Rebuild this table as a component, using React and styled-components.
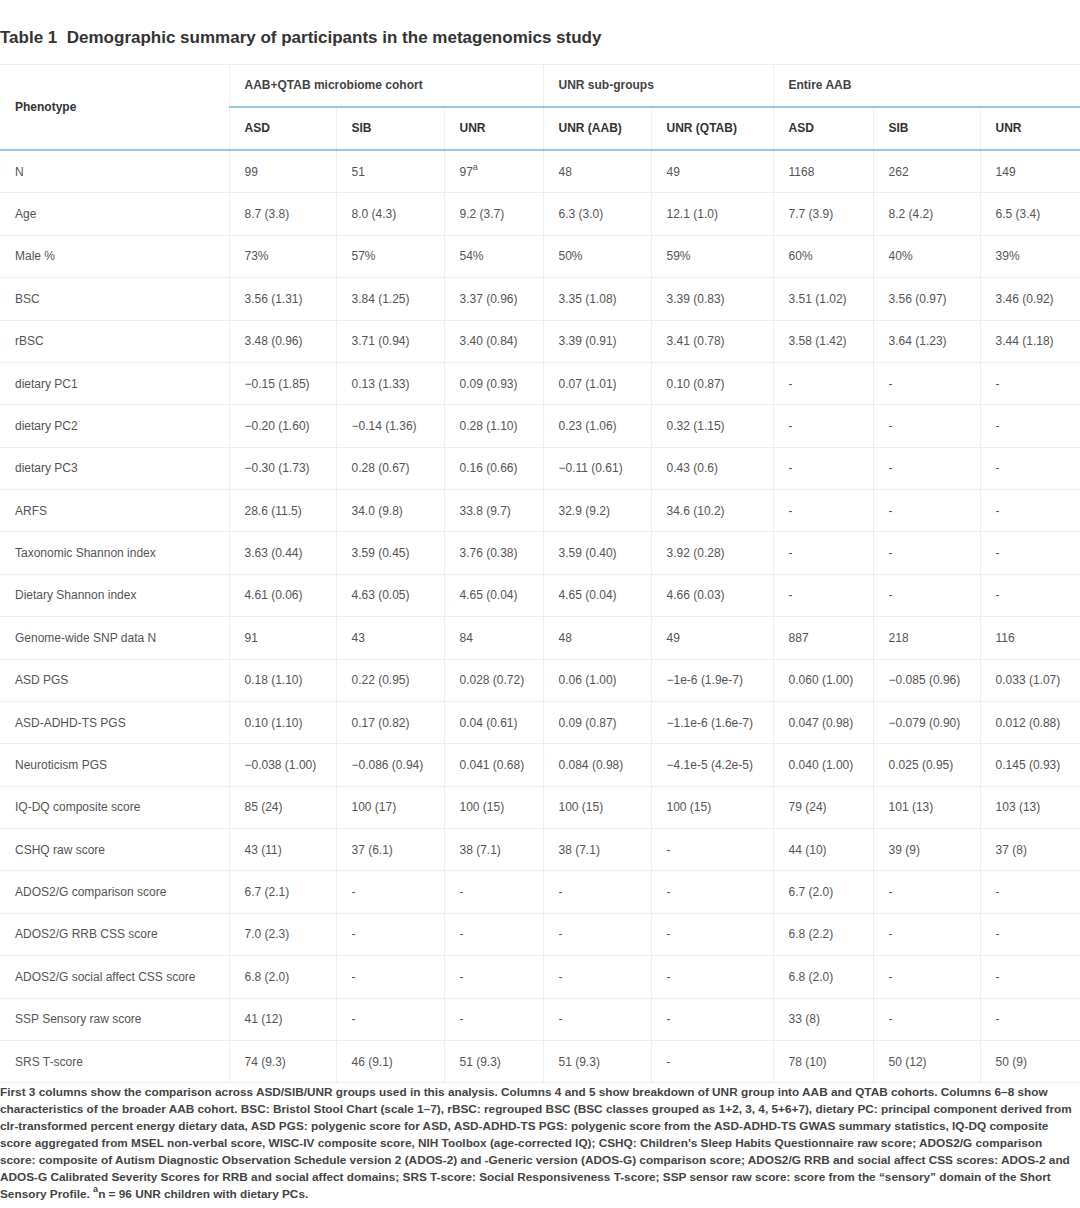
import React from 'react'
import styled, { createGlobalStyle } from 'styled-components'

const GlobalStyle = createGlobalStyle`
  html, body {
    margin: 0;
    padding: 0;
    background: #fff;
  }
  body {
    font-family: "Liberation Sans", Arial, sans-serif;
  }
`

const Page = styled.div`
  width: 1080px;
  overflow: hidden;
`

const Title = styled.h2`
  margin: 0;
  padding: 28px 0 0 0;
  font-size: 17px;
  line-height: 20px;
  font-weight: 700;
  color: #333;
  height: 36px;
  box-sizing: content-box;
`

const Table = styled.table`
  width: 1080px;
  table-layout: fixed;
  border-collapse: collapse;
  border-top: 1px solid #eee;
  font-size: 12px;
`

const HeadCell = styled.th`
  text-align: left;
  font-weight: 700;
  color: #333;
  padding: 11px 15px 12px 15px;
  height: 18px;
  line-height: 18px;
  border-left: 1px solid #f0f0f0;
  border-right: 1px solid #f0f0f0;
  border-bottom: ${p => (p.$bottom ? '2px solid #93c9e0' : '1px solid #eee')};
  &:first-child {
    border-left: none;
  }
`

const GroupCell = styled(HeadCell)`
  color: #444;
  border-bottom: 2px solid #93c9e0;
`

const Cell = styled.td`
  padding: 11.7px 15px;
  line-height: 18px;
  color: #555;
  border: 1px solid #eee;
  white-space: nowrap;
  &:first-child {
    border-left: none;
  }
`

const Sup = styled.sup`
  font-size: 9px;
  line-height: 0;
  vertical-align: 6px;
`

const Footnote = styled.p`
  margin: 1px 0 0 0;
  width: 1076px;
  font-size: 11.8px;
  line-height: 17px;
  font-weight: 700;
  color: #444;
`

const widths = [229, 107, 108, 99, 108, 122, 100, 107, 100]

const M = '\u2212'

const rows = [
  ['N', '99', '51', <>97<Sup>a</Sup></>, '48', '49', '1168', '262', '149'],
  ['Age', '8.7 (3.8)', '8.0 (4.3)', '9.2 (3.7)', '6.3 (3.0)', '12.1 (1.0)', '7.7 (3.9)', '8.2 (4.2)', '6.5 (3.4)'],
  ['Male %', '73%', '57%', '54%', '50%', '59%', '60%', '40%', '39%'],
  ['BSC', '3.56 (1.31)', '3.84 (1.25)', '3.37 (0.96)', '3.35 (1.08)', '3.39 (0.83)', '3.51 (1.02)', '3.56 (0.97)', '3.46 (0.92)'],
  ['rBSC', '3.48 (0.96)', '3.71 (0.94)', '3.40 (0.84)', '3.39 (0.91)', '3.41 (0.78)', '3.58 (1.42)', '3.64 (1.23)', '3.44 (1.18)'],
  ['dietary PC1', M + '0.15 (1.85)', '0.13 (1.33)', '0.09 (0.93)', '0.07 (1.01)', '0.10 (0.87)', '-', '-', '-'],
  ['dietary PC2', M + '0.20 (1.60)', M + '0.14 (1.36)', '0.28 (1.10)', '0.23 (1.06)', '0.32 (1.15)', '-', '-', '-'],
  ['dietary PC3', M + '0.30 (1.73)', '0.28 (0.67)', '0.16 (0.66)', M + '0.11 (0.61)', '0.43 (0.6)', '-', '-', '-'],
  ['ARFS', '28.6 (11.5)', '34.0 (9.8)', '33.8 (9.7)', '32.9 (9.2)', '34.6 (10.2)', '-', '-', '-'],
  ['Taxonomic Shannon index', '3.63 (0.44)', '3.59 (0.45)', '3.76 (0.38)', '3.59 (0.40)', '3.92 (0.28)', '-', '-', '-'],
  ['Dietary Shannon index', '4.61 (0.06)', '4.63 (0.05)', '4.65 (0.04)', '4.65 (0.04)', '4.66 (0.03)', '-', '-', '-'],
  ['Genome-wide SNP data N', '91', '43', '84', '48', '49', '887', '218', '116'],
  ['ASD PGS', '0.18 (1.10)', '0.22 (0.95)', '0.028 (0.72)', '0.06 (1.00)', M + '1e-6 (1.9e-7)', '0.060 (1.00)', M + '0.085 (0.96)', '0.033 (1.07)'],
  ['ASD-ADHD-TS PGS', '0.10 (1.10)', '0.17 (0.82)', '0.04 (0.61)', '0.09 (0.87)', M + '1.1e-6 (1.6e-7)', '0.047 (0.98)', M + '0.079 (0.90)', '0.012 (0.88)'],
  ['Neuroticism PGS', M + '0.038 (1.00)', M + '0.086 (0.94)', '0.041 (0.68)', '0.084 (0.98)', M + '4.1e-5 (4.2e-5)', '0.040 (1.00)', '0.025 (0.95)', '0.145 (0.93)'],
  ['IQ-DQ composite score', '85 (24)', '100 (17)', '100 (15)', '100 (15)', '100 (15)', '79 (24)', '101 (13)', '103 (13)'],
  ['CSHQ raw score', '43 (11)', '37 (6.1)', '38 (7.1)', '38 (7.1)', '-', '44 (10)', '39 (9)', '37 (8)'],
  ['ADOS2/G comparison score', '6.7 (2.1)', '-', '-', '-', '-', '6.7 (2.0)', '-', '-'],
  ['ADOS2/G RRB CSS score', '7.0 (2.3)', '-', '-', '-', '-', '6.8 (2.2)', '-', '-'],
  ['ADOS2/G social affect CSS score', '6.8 (2.0)', '-', '-', '-', '-', '6.8 (2.0)', '-', '-'],
  ['SSP Sensory raw score', '41 (12)', '-', '-', '-', '-', '33 (8)', '-', '-'],
  ['SRS T-score', '74 (9.3)', '46 (9.1)', '51 (9.3)', '51 (9.3)', '-', '78 (10)', '50 (12)', '50 (9)'],
]

const App = () => {
  return (
    <Page>
      <GlobalStyle />
      <Title>Table 1&nbsp; Demographic summary of participants in the metagenomics study</Title>
      <Table>
        <colgroup>
          {widths.map((w, i) => (
            <col key={i} style={{ width: w }} />
          ))}
        </colgroup>
        <thead>
          <tr>
            <HeadCell rowSpan={2} $bottom>Phenotype</HeadCell>
            <GroupCell colSpan={3}>AAB+QTAB microbiome cohort</GroupCell>
            <GroupCell colSpan={2}>UNR sub-groups</GroupCell>
            <GroupCell colSpan={3}>Entire AAB</GroupCell>
          </tr>
          <tr>
            <HeadCell $bottom>ASD</HeadCell>
            <HeadCell $bottom>SIB</HeadCell>
            <HeadCell $bottom>UNR</HeadCell>
            <HeadCell $bottom>UNR (AAB)</HeadCell>
            <HeadCell $bottom>UNR (QTAB)</HeadCell>
            <HeadCell $bottom>ASD</HeadCell>
            <HeadCell $bottom>SIB</HeadCell>
            <HeadCell $bottom>UNR</HeadCell>
          </tr>
        </thead>
        <tbody>
          {rows.map((r, i) => (
            <tr key={i}>
              {r.map((c, j) => (
                <Cell key={j}>{c}</Cell>
              ))}
            </tr>
          ))}
        </tbody>
      </Table>
      <Footnote>
        First 3 columns show the comparison across ASD/SIB/UNR groups used in this analysis. Columns 4 and 5 show breakdown of UNR group into AAB and QTAB cohorts. Columns 6–8 show characteristics of the broader AAB cohort. BSC: Bristol Stool Chart (scale 1–7), rBSC: regrouped BSC (BSC classes grouped as 1+2, 3, 4, 5+6+7), dietary PC: principal component derived from clr-transformed percent energy dietary data, ASD PGS: polygenic score for ASD, ASD-ADHD-TS PGS: polygenic score from the ASD-ADHD-TS GWAS summary statistics, IQ-DQ composite score aggregated from MSEL non-verbal score, WISC-IV composite score, NIH Toolbox (age-corrected IQ); CSHQ: Children’s Sleep Habits Questionnaire raw score; ADOS2/G comparison score: composite of Autism Diagnostic Observation Schedule version 2 (ADOS-2) and -Generic version (ADOS-G) comparison score; ADOS2/G RRB and social affect CSS scores: ADOS-2 and ADOS-G Calibrated Severity Scores for RRB and social affect domains; SRS T-score: Social Responsiveness T-score; SSP sensor raw score: score from the “sensory” domain of the Short Sensory Profile. <Sup>a</Sup>n = 96 UNR children with dietary PCs.
      </Footnote>
    </Page>
  )
}

export default App
